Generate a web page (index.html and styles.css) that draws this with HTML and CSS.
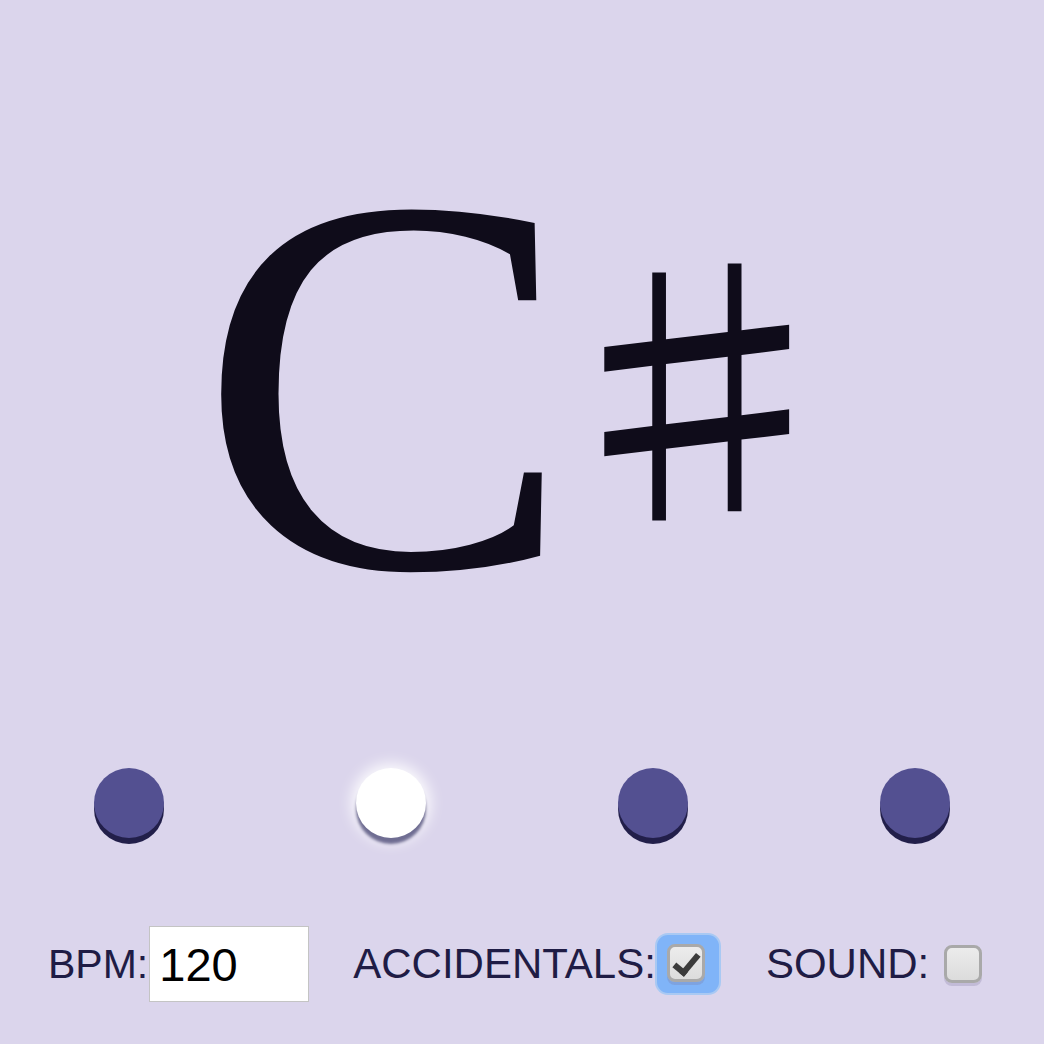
FILE: index.html
```html
<!DOCTYPE html>
<html>
<head>
<meta charset="utf-8">
<link rel="stylesheet" href="styles.css">
</head>
<body>
<div class="app">
  <div class="note-area">
    <div class="note"><span class="letter">C</span><span class="accidental">♯</span></div>
  </div>
  <div class="beats">
    <div class="beat"><span class="dot"></span></div>
    <div class="beat"><span class="dot active"></span></div>
    <div class="beat"><span class="dot"></span></div>
    <div class="beat"><span class="dot"></span></div>
  </div>
  <div class="controls">
    <label class="control bpm">BPM:<input class="bpm-input" type="text" value="120"></label>
    <label class="control acc">ACCIDENTALS:<span class="focus-ring"><input class="check" type="checkbox" checked></span></label>
    <label class="control sound">SOUND:<input class="check plain" type="checkbox"></label>
  </div>
</div>
</body>
</html>
```
FILE: styles.css
```css
html, body {
  margin: 0;
  padding: 0;
  background: #dbd5ec;
}
.app {
  width: 1044px;
  height: 1044px;
  display: flex;
  flex-direction: column;
  overflow: hidden;
}
.note-area {
  height: 760px;
  display: flex;
  align-items: center;
  justify-content: flex-start;
  padding-left: 199px;
}
.note {
  display: flex;
  align-items: center;
  color: #0f0c1a;
  margin-top: 10px;
}
.letter {
  font-family: "Liberation Serif", serif;
  font-size: 540px;
  line-height: 1;
  letter-spacing: -38px;
  transform-origin: 21px center;
  transform: scaleX(1.04);
}
.accidental {
  font-family: "Noto Sans CJK JP", "DejaVu Sans", sans-serif;
  font-size: 294px;
  line-height: 1;
  transform-origin: left center;
  transform: translateY(-9px) scaleX(1.2);
}
.beats {
  display: flex;
  height: 90px;
  margin-left: -2px;
}
.beat {
  flex: 0 0 262px;
  display: flex;
  justify-content: center;
  padding-top: 8px;
}
.dot {
  width: 70px;
  height: 70px;
  border-radius: 50%;
  background: #535091;
  box-shadow: 0 6px 0 #221f4a;
}
.dot.active {
  background: #ffffff;
  box-shadow: 0 6px 3px #6f6d92, 0 0 14px 5px rgba(255,255,255,0.85);
}
.controls {
  display: flex;
  align-items: center;
  padding-left: 48px;
  margin-top: 76px;
  font-family: "Liberation Sans", Arial, sans-serif;
  font-size: 42px;
  color: #1f1c45;
}
.control {
  display: flex;
  align-items: center;
}
.bpm {
  font-size: 41px;
}
.bpm-input {
  width: 160px;
  height: 76px;
  box-sizing: border-box;
  border: 1px solid #c4c4c4;
  background: #fff;
  font-family: "Liberation Sans", Arial, sans-serif;
  font-size: 47px;
  color: #000;
  padding: 0 0 0 9px;
  margin: 0 0 0 1px;
  outline: none;
}
.acc {
  margin-left: 44px;
}
.sound {
  margin-left: 47px;
}
.focus-ring {
  display: inline-flex;
  padding: 9px 14px 11px 10px;
  margin-left: 1px;
  border-radius: 11px;
  background: #80b4f8;
  box-shadow: 0 0 0 2px #a9c9f3;
}
.check {
  -webkit-appearance: none;
  appearance: none;
  width: 38px;
  height: 38px;
  margin: 0;
  box-sizing: border-box;
  border: 3px solid #a9a9a9;
  border-radius: 8px;
  background: linear-gradient(#ececec, #dcdcdc);
  box-shadow: 0 3px 0 rgba(120,110,150,0.25);
  position: relative;
}
.check:checked::after {
  content: "";
  position: absolute;
  left: 9px;
  top: 2px;
  width: 9px;
  height: 20px;
  border: solid #3b3b3b;
  border-width: 0 6px 6px 0;
  transform: rotate(40deg);
}
.check.plain {
  margin-left: 15px;
}
```
